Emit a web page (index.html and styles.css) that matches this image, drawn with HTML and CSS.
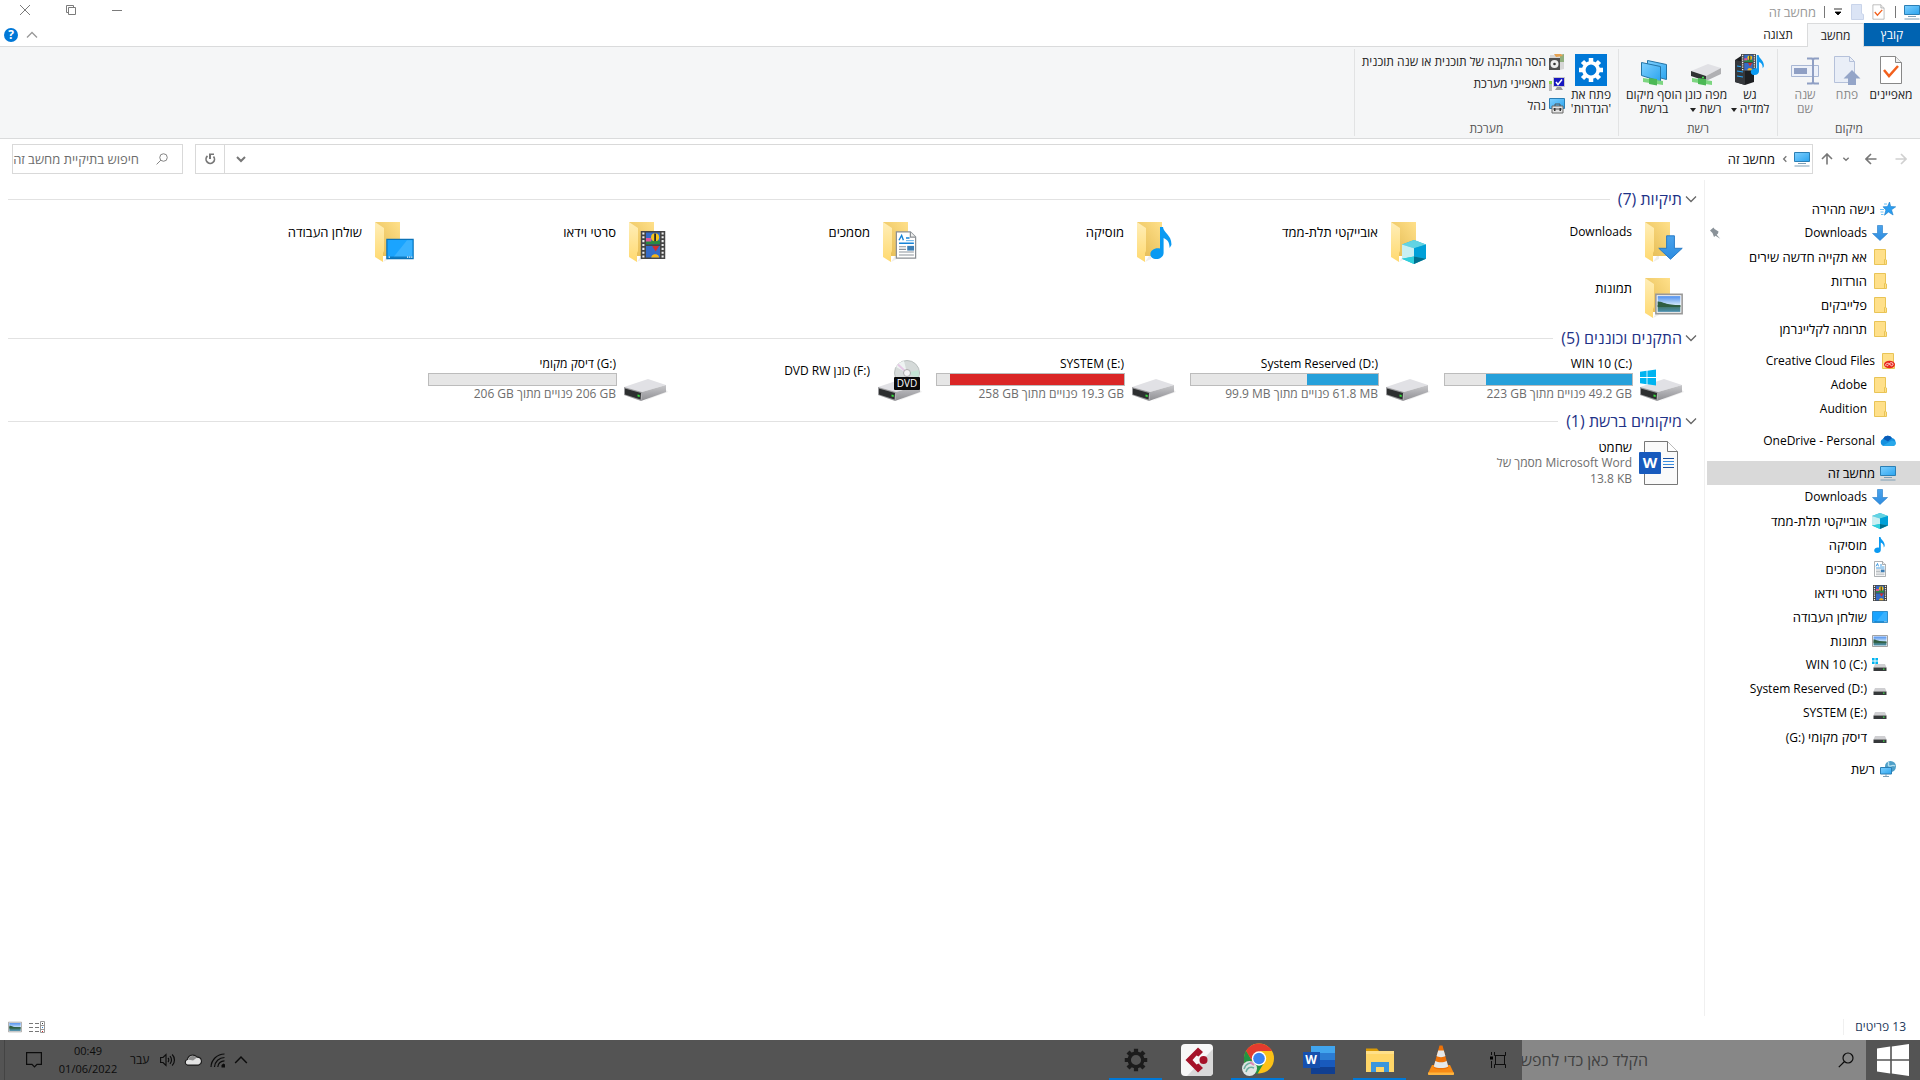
FILE: index.html
```html
<!DOCTYPE html>
<html lang="he" dir="rtl">
<head>
<meta charset="utf-8">
<meta name="viewport" content="width=device-width, initial-scale=1">
<title>מחשב זה</title>
<link rel="stylesheet" href="styles.css">
</head>
<body>
<svg class="sprite" aria-hidden="true">
  <defs>
    <linearGradient id="g-back" x1="0" y1="1" x2="1" y2="0"><stop offset="0" stop-color="#e3b950"/><stop offset="1" stop-color="#ffe08a"/></linearGradient>
    <linearGradient id="g-leaf" x1="0" y1="0" x2="0" y2="1"><stop offset="0" stop-color="#ffeeb8"/><stop offset="1" stop-color="#ffd96f"/></linearGradient>
    <linearGradient id="g-screen" x1="0" y1="0" x2="1" y2="1"><stop offset="0" stop-color="#7fd0ff"/><stop offset="1" stop-color="#2ba4ef"/></linearGradient>
    <linearGradient id="g-side" x1="0" y1="0" x2="0" y2="1"><stop offset="0" stop-color="#c8c8cb"/><stop offset="1" stop-color="#8e8e92"/></linearGradient>
    <linearGradient id="g-sky" x1="0" y1="0" x2="0" y2="1"><stop offset="0" stop-color="#4f8fee"/><stop offset=".55" stop-color="#cfe6fa"/><stop offset=".56" stop-color="#3e6d55"/><stop offset="1" stop-color="#4a8fb0"/></linearGradient>
    <linearGradient id="g-arrow" x1="0" y1="0" x2="0" y2="1"><stop offset="0" stop-color="#4aa3ec"/><stop offset="1" stop-color="#2d8ce0"/></linearGradient>
  </defs>

  <symbol id="i-folder-open" viewBox="0 0 48 48"><path d="M15 45l6-3V36z" fill="#eee"/><path d="M7 5H32V39H15z" fill="url(#g-back)"/><path d="M7 5l9 6v23l-1 2v9L7 40z" fill="url(#g-leaf)"/></symbol>
  <symbol id="i-down" viewBox="0 0 16 16"><path d="M5.500.5h5V8.500h5L8 15.500.5 8.500h5z" fill="url(#g-arrow)" stroke="#2278c4" stroke-width=".6"/></symbol>
  <symbol id="i-cube" viewBox="0 0 16 16"><path d="M8 0l8 3v9.500L8 16 0 12.500V3z" fill="#29b7d3"/><path d="M8 0l8 3-8 2.500L0 3z" fill="#62d3e3"/><path d="M0 3l8 2.500V11L0 12.500z" fill="#c9eff2"/><path d="M8 5.500L16 3v9.500L8 11z" fill="#00a0d8"/><path d="M8 11l8 1.500L8 16z" fill="#00708f"/><path d="M0 12.500L8 11v5z" fill="#2fd0dc"/></symbol>
  <symbol id="i-note" viewBox="0 0 16 16"><path d="M7 0h1.500c.2 3 4.500 4 4.200 9l-.9 1.500c0-3-1.200-4.200-3-5V13c0 1.700-1.600 3-3.600 3-1.800 0-3-.9-3-2.500 0-1.900 2.600-3.400 4.800-2.700z" fill="#0a9af2"/></symbol>
  <symbol id="i-doc" viewBox="0 0 16 16"><path d="M2.500.5h8l3 3v12h-11z" fill="#fff" stroke="#8a8f94" stroke-width=".7"/><path d="M10.500.5v3h3" fill="#eee" stroke="#8a8f94" stroke-width=".7"/><path d="M4 5.300L5.500 2.500 6.500 5.300M8 4h2M4 7h8.500" stroke="#1583d8" fill="none" stroke-width=".8"/><path d="M8 5.500h4.500" stroke="#6bb5ea" stroke-width=".6"/><path d="M4 9h4M4 10.500h4M4 12h8.500M4 13.700h8.500" stroke="#8c949b" stroke-width=".6"/><path d="M8.700 8.500H12.600V11.200H8.700z" fill="#3e7fb5"/></symbol>
  <symbol id="i-film" viewBox="0 0 16 16"><path d="M1 0h14v16H1z" fill="#444"/><path d="M4 .8h8v6.700H4zM4 8.500h8v6.700H4z" fill="#356bc8"/><path d="M4 5.500h8v2H4z" fill="#278b42"/><path d="M4 4h3v2H4z" fill="#e0559a"/><circle cx="9.200" cy="3.600" r="2.300" fill="#f5c51b"/><path d="M8.700 1.400h1v4.500h-1z" fill="#20242c"/><path d="M7.500 8.500h4l-2 3.200z" fill="#d22e2e"/><path d="M7 15.200c0-2.600 4.500-2.600 4.500 0z" fill="#f5b51b"/><path d="M2.500.8v15M13.500.8v15" stroke="#eee" stroke-width="1.200" stroke-dasharray="1.200 1"/></symbol>
  <symbol id="i-desk" viewBox="0 0 16 16"><path d="M.5 2.500h15v11H.5z" fill="#1aa4ff" stroke="#0a72b8" stroke-width=".7"/><path d="M4 13L12 3h3v10z" fill="#3ab2ff"/><path d="M1 12.700h14" stroke="#0a72b8" stroke-width=".7"/><path d="M1.500 12.700h1M12 12.700h3" stroke="#fff" stroke-width=".7" stroke-dasharray=".7 .5"/></symbol>
  <symbol id="i-pic" viewBox="0 0 16 16"><path d="M.5 2.500h15v11H.5z" fill="#fff" stroke="#999" stroke-width=".9"/><path d="M1.500 3.500h13v9h-13z" fill="url(#g-sky)"/><path d="M1.500 6.500c3 0 4.500 2 13 2.200v1h-13z" fill="#2f5e41"/></symbol>
  <symbol id="i-folder" viewBox="0 0 16 16"><path d="M2.500.5h11v10l1 .5v4.500h-12z" fill="#ffe08a" stroke="#e9c456"/><path d="M12.500 15V10.500h1" fill="none" stroke="#e9c456"/></symbol>
  <symbol id="i-pc" viewBox="0 0 16 16"><path d="M.5 1.500h15v9H.5z" fill="url(#g-screen)" stroke="#2b7fb5"/><path d="M4 12.500h8M.5 15h15" stroke="#7f9fb5"/></symbol>
  <symbol id="i-drive" viewBox="0 0 48 48"><path d="M22 45l24-9-3-3z" fill="#eee"/><path d="M2 31l24-8 18 6-24 7z" fill="#e1e1e5"/><path d="M20 36l24-7v7l-25 9z" fill="url(#g-side)"/><path d="M2 31l18 5-1 9-17-6z" fill="#9b9b9e"/><path d="M3 32.500l16 4.500-.5 6.500L3 38.500z" fill="#2d2f30"/><path d="M15.500 38.500l2.200.6v2l-2.200-.6z" fill="#35e03c"/></symbol>
  <symbol id="i-drive-s" viewBox="0 0 16 16"><path d="M3 5h10l1.500 3.500h-13z" fill="#cfcfd2"/><path d="M1.500 8.500h13V12h-13z" fill="#36393b"/><path d="M11 10.200h1.500" stroke="#41e04c" stroke-width="1.200"/></symbol>
  <symbol id="i-win" viewBox="0 0 16 16"><path d="M0 2.300L6.600 1.300V7.600H0zM7.400 1.200L16 0V7.600H7.400zM0 8.400H6.600V14.700L0 13.700zM7.400 8.400H16V16L7.400 14.800z"/></symbol>
  <symbol id="i-drive-win" viewBox="0 0 16 16"><use href="#i-drive-s" y="2"/><path d="M0 1h2.600v2.600H0zM3.400 1H6v2.600H3.400zM0 4.400h2.600V7H0zM3.400 4.400H6V7H3.400z" fill="#00b4f0"/></symbol>
  <symbol id="i-star" viewBox="0 0 16 16"><path d="M9.500 1l1.200 4.500 5 .3-4.200 3 1.600 5.200-4.600-3-4 3.200 1.400-5.200L3 5.800l4.500-.2z" fill="#2a9df0" stroke="#1c7cc8" stroke-width=".6"/><path d="M0 8.500h4M.5 11h3M1 13.500h2.500M4 3h3" stroke="#6cc0f5"/></symbol>
  <symbol id="i-pin" viewBox="0 0 12 12"><path d="M1 3.500L4.500.5l1 1.500 4 2.500-.5 2L7.700 7.700l3.500 4-4.700-3L5 10 3.500 6z" fill="#8a9299"/></symbol>
  <symbol id="i-cc" viewBox="0 0 16 16"><use href="#i-folder"/><ellipse cx="9.500" cy="11.500" rx="5.500" ry="3.800" fill="#e8261c"/><path d="M5.500 12.500c0-2.500 3.500-3 4.500-1s3 1.500 3-.3-2.500-2-3.500-.5-2 2.700-3 1.800" fill="none" stroke="#fff" stroke-width=".8"/></symbol>
  <symbol id="i-cloud" viewBox="0 0 16 16"><path d="M4 13a3.800 3.800 0 0 1-.8-7.300A5 5 0 0 1 12 5a4.200 4.200 0 0 1 1 8z" fill="#1490df"/><path d="M3.200 5.700A5 5 0 0 1 12 5l-4 3.500z" fill="#0a5cb8"/><path d="M3 12.500L12 7.500l3.500 1.500c1 2-.5 4-2.500 4H4z" fill="#28a8ea"/></symbol>
  <symbol id="i-net" viewBox="0 0 16 16"><circle cx="10.500" cy="5.500" r="5.500" fill="#4e9fc8"/><path d="M8 1c2 2-1 3 1 4s3-2 6 0" fill="none" stroke="#b5dfef" stroke-width="1.400"/><path d="M.5 6.500h11v6.500H.5z" fill="url(#g-screen)" stroke="#2b7fb5"/><path d="M3 15.500h6M6 13v2" stroke="#7f9fb5"/></symbol>

  <symbol id="i-prop" viewBox="0 0 22 30"><path d="M.5 1.500h15l6 6v21H.5z" fill="#fff" stroke="#888"/><path d="M15.500 1.500v6h6" fill="#eee" stroke="#888"/><path d="M4 15l5 6 9-10" fill="none" stroke="#f2601d" stroke-width="2.500"/></symbol>
  <symbol id="i-open" viewBox="0 0 28 32"><path d="M1.500 2.500h15l5 5v21h-20z" fill="#e9eef7" stroke="#b5c1da"/><path d="M16.500 2.500v5h5" fill="none" stroke="#b5c1da"/><path d="M19 16l8.500 8.500H23V31h-8v-6.500h-4.500z" fill="#94a5c8"/></symbol>
  <symbol id="i-rename" viewBox="0 0 28 32"><path d="M.5 11.500h27v11H.5z" fill="#edf1f9" stroke="#a9b7d4"/><path d="M3 14h13v6H3z" fill="#8f9fc4"/><path d="M16 4.500h5l1 1.500 1-1.500h5M16 29.500h5l1-1.500 1 1.500h5M22 5v24" fill="none" stroke="#8f9fc4" stroke-width="2"/></symbol>
  <symbol id="i-media" viewBox="0 0 32 32"><path d="M1 6l6-4 13 2v24l-9 3-10-3z" fill="#1d1f22"/><path d="M1 6l10 2v23L1 28z" fill="#35383c"/><path d="M3 12l6 1M3 17l6 1M3 22l6 1" stroke="#22a6ff" stroke-width="1.200"/><svg x="6" y="0" width="17" height="17" viewBox="0 0 16 16"><use href="#i-film"/></svg><svg x="14" y="1" width="20" height="20" viewBox="0 0 16 16"><use href="#i-note"/></svg></symbol>
  <symbol id="i-pipe" viewBox="0 0 20 8"><path d="M0 0l20 3v4L0 4z" fill="#7dd681"/><path d="M6 0l8 1v6.500L6 6z" fill="#4cb955"/></symbol>
  <symbol id="i-map" viewBox="0 0 32 32"><path d="M1 17l17-7 13 4-15 8z" fill="#e1e1e5"/><path d="M16 22l15-8v6l-15 7z" fill="#b0b0b3"/><path d="M1 17l15 5v5L1 22z" fill="#303233"/><path d="M12 23.500h2" stroke="#3fe04a" stroke-width="1.500"/><use href="#i-pipe" x="2" y="24" width="20" height="8"/></symbol>
  <symbol id="i-addnet" viewBox="0 0 32 32"><path d="M9.500 6.500l19 4v15l-19-5z" fill="url(#g-screen)" stroke="#2474a6"/><path d="M3.500 8.500l19 4v15l-19-6z" fill="url(#g-screen)" stroke="#2474a6"/><use href="#i-pipe" x="5" y="24" width="20" height="8"/></symbol>
  <symbol id="i-gear" viewBox="0 0 32 32"><circle cx="16" cy="16" r="7.200" fill="none" stroke="currentColor" stroke-width="3.600"/><path d="M16 4v4M16 24v4M4 16h4M24 16h4M7.500 7.500l3 3M21.500 21.500l3 3M24.500 7.500l-3 3M10.500 21.500l-3 3" stroke="currentColor" stroke-width="4.500"/></symbol>
  <symbol id="i-uninst" viewBox="0 0 16 16"><path d="M1 1h10l4-1v15l-4 1H1z" fill="#d7d7d7"/><path d="M11 1l4-1v8h-4z" fill="#8fae7d"/><path d="M5 0l7 0 2 2-7 1z" fill="#e6a252"/><path d="M0 4h11v12H0z" fill="#505050"/><circle cx="5.500" cy="10" r="4" fill="#eee"/><circle cx="5.500" cy="10" r="1.300" fill="#333"/></symbol>
  <symbol id="i-sysprop" viewBox="0 0 16 16"><path d="M4 1h12v10H4z" fill="#c9c9c9"/><path d="M5 2h10v8H5z" fill="#1717c0"/><path d="M7 6l2 2.500L13 3.500" stroke="#fff" fill="none" stroke-width="1.500"/><path d="M8 11h4l2 3H6z" fill="#999"/><path d="M0 5h3v10H0z" fill="#bbb"/><path d="M0 5h3v3H0z" fill="#8dd34a"/></symbol>
  <symbol id="i-manage" viewBox="0 0 16 16"><path d="M.5.5h15v10H.5z" fill="url(#g-screen)" stroke="#2b7fb5"/><path d="M3 8h11v7H3z" fill="#e3e3e3" stroke="#666"/><path d="M6 8V6h5v2M4 11h9" stroke="#555" fill="none"/><path d="M5 10h1.500v3H5zM10.500 10H12v3h-1.500z" fill="#333"/></symbol>

  <symbol id="i-x" viewBox="0 0 12 12"><path d="M1 1l10 10M11 1L1 11" stroke="#7b7b7b" fill="none"/></symbol>
  <symbol id="i-restore" viewBox="0 0 12 12"><path d="M3.500 3.500h7v7h-7zM3.500 8.500h-2v-7h7v2" stroke="#7b7b7b" fill="none"/></symbol>
  <symbol id="i-min" viewBox="0 0 12 12"><path d="M1 6.500h10" stroke="#7b7b7b"/></symbol>
  <symbol id="i-chev" viewBox="0 0 12 12"><path d="M1 3.500l5 5 5-5" stroke="currentColor" stroke-width="1.300" fill="none"/></symbol>
  <symbol id="i-chev-b" viewBox="0 0 12 12"><path d="M2 4l4 4 4-4" stroke="currentColor" stroke-width="2" fill="none"/></symbol>
  <symbol id="i-arrow" viewBox="0 0 12 12"><path d="M.5 6h11M6 1L1 6l5 5" stroke="currentColor" stroke-width="1.600" fill="none"/></symbol>
  <symbol id="i-mag" viewBox="0 0 16 16"><circle cx="10" cy="6" r="5" stroke="currentColor" fill="none" stroke-width="1.200"/><path d="M6.500 9.500L.8 15.200" stroke="currentColor" stroke-width="1.200"/></symbol>
  <symbol id="i-refresh" viewBox="0 0 12 12"><path d="M9.500 3.500a4.200 4.200 0 1 1-6-.5" stroke="currentColor" fill="none" stroke-width="1.700"/><path d="M5 .5h5v1.500H7V6H5z" fill="currentColor"/></symbol>
  <symbol id="i-details" viewBox="0 0 16 12"><path d="M0 2.500h4M6 2.500h4M0 6.500h4M6 6.500h4M0 10.500h4M6 10.500h4" stroke="#777"/><path d="M11.500.5h4v11h-4zM11.500 4.500h4M11.500 8.500h4" fill="none" stroke="#999"/><path d="M13 2h1v1h-1z" fill="#333"/><path d="M13 6h1v1h-1z" fill="#27c"/><path d="M13 10h1v1h-1z" fill="#c22"/></symbol>

  <symbol id="i-tview" viewBox="0 0 16 16"><path d="M4.500 0v3.500h11V0M4.500 16v-3.500h11V16M5.500 3.500v9M14.500 3.500v9M1.500 0v3M1.500 9v7" stroke="#0d0d0d" fill="none"/><path d="M0 4.500h3v3H0z" fill="#000"/></symbol>
  <symbol id="i-vlc" viewBox="0 0 32 32"><path d="M7 21h18l4 8.500c0 .5-.5 1-1 1H4c-.5 0-1-.5-1-1z" fill="#f98a14"/><path d="M3 28.500h26v1.500c0 .5-.5 1-1 1H4c-.5 0-1-.5-1-1z" fill="#ffb43e"/><path d="M14.500 1.500h3l6 22c-2 2.500-13 2.500-15 0z" fill="#ee7208"/><path d="M13.200 6.500h5.600l1.600 5.500c-2 1.500-6.800 1.500-8.800 0zM10.300 17c3 1.700 8.400 1.700 11.400 0l1.500 5.500c-3 2-11.400 2-14.400 0z" fill="#e5e8ea"/></symbol>
  <symbol id="i-expl" viewBox="0 0 32 32"><path d="M2 4.500h11l2 2.500H2z" fill="#d99a06"/><path d="M2 7h28v21H2z" fill="#ffd668"/><path d="M2 7h28v3H2z" fill="#ffe08a"/><path d="M7 28V18h18v10h-5v-5h-8v5z" fill="#3a96dd"/></symbol>
  <symbol id="i-chrome" viewBox="0 0 34 34"><circle cx="18" cy="15.500" r="15" fill="#fbc116"/><path d="M5 8a15 15 0 0 1 26 0H18z" fill="#e33b2e"/><path d="M5 8a15 15 0 0 0 11.500 22.400L23 20 11.500 19z" fill="#229342"/><path d="M5 8h14v5l-8 5z" fill="#e33b2e"/><path d="M5 8l6.500 11L18 22l-1 8.400A15 15 0 0 1 5 8z" fill="#229342"/><circle cx="18" cy="15.500" r="7.200" fill="#fff"/><circle cx="18" cy="15.500" r="5.800" fill="#3a82f0"/><circle cx="8.500" cy="25.500" r="7.500" fill="#dfe5e2"/><path d="M3 26c2-6 7-7 9-5M5 29c1-4 4-6 8-4" stroke="#6fb0a0" stroke-width="1.500" fill="none"/><path d="M9 19l4 3" stroke="#e088b8" stroke-width="2"/></symbol>
  <symbol id="i-cubase" viewBox="0 0 32 32"><rect width="32" height="32" rx="4" fill="#f7f7f7"/><path d="M32 5v23a4 4 0 0 1-4 4H6z" fill="#d9d9d9"/><path d="M4.500 16L17 3.500l5 4.500-4.500 4.500-2-1-4 4.500 4 4.500 2-1L22 24l-5 4.500z" fill="#a51329"/><circle cx="22.500" cy="16" r="4" fill="#a51329"/></symbol>
  <symbol id="i-wifi" viewBox="0 0 16 16"><g fill="none" stroke="#0c0c0c" stroke-width="1.200"><path d="M1 15A13.500 13.500 0 0 1 14.500 2"/><path d="M4.500 15A10 10 0 0 1 14.500 5.500"/><path d="M7.800 15A6.600 6.600 0 0 1 14.500 8.800"/></g><path d="M11.500 15.500v-2.500l2-1.500 1.500 1v3z" fill="#0c0c0c"/></symbol>
  <symbol id="i-tcloud" viewBox="0 0 16 16"><path d="M3 12.500a2.600 2.600 0 0 1 0-5A4.800 4.800 0 0 1 11.500 5.500a3.600 3.600 0 0 1 1.500 7z" fill="#e3e3e3" stroke="#1c1c1c"/><path d="M3.500 7.500A4.500 4.500 0 0 1 11.300 6L8 8.500z" fill="#8d8d8d"/></symbol>
  <symbol id="i-vol" viewBox="0 0 16 16"><path d="M.6 5.500H3L6 2.500v11L3 10.500H.6z" fill="none" stroke="#0c0c0c" stroke-width="1.100"/><path d="M8 6c1 1 1 3 0 4M10 4.200c2 2 2 5.600 0 7.600M12.200 2.500c3 3 3 8 0 11" fill="none" stroke="#0c0c0c" stroke-width="1.200"/></symbol>
  <symbol id="i-notif" viewBox="0 0 16 16"><path d="M.6.6h14.800v11.800H11L8.500 15l-2.500-2.600H.6z" fill="none" stroke="#0c0c0c" stroke-width="1.200"/></symbol>
</svg>

<header class="titlebar">
  <div class="quick">
    <svg class="ic16"><use href="#i-pc"/></svg>
    <span class="vline"></span>
    <button class="plain props" aria-label="מאפיינים"><svg class="ic-doc"><use href="#i-prop"/></svg></button>
    <button class="plain" aria-label="תיקיה חדשה"><svg class="ic-doc" viewBox="0 0 13 16"><path d="M.5.5h10v9l2 1v5H.5z" fill="#dbe4f5" stroke="#c9d4ea"/></svg></button>
    <button class="plain more" aria-label="התאמה אישית"><svg class="ic8" viewBox="0 0 8 8"><path d="M0 1h8M1 4h6L4 7z" stroke="#000" fill="#000" stroke-width=".8"/></svg></button>
    <span class="vline"></span>
    <span class="title">מחשב זה</span>
  </div>
  <div class="wincontrols">
    <button class="plain" aria-label="מזער"><svg class="ic12"><use href="#i-min"/></svg></button>
    <button class="plain" aria-label="שחזר"><svg class="ic12"><use href="#i-restore"/></svg></button>
    <button class="plain" aria-label="סגור"><svg class="ic12"><use href="#i-x"/></svg></button>
  </div>
</header>

<nav class="tabs">
  <button class="tab file">קובץ</button>
  <button class="tab active">מחשב</button>
  <button class="tab view">תצוגה</button>
  <div class="tabs-end">
    <button class="plain collapse" aria-label="כווץ את רצועת הכלים"><svg class="ic12 flip"><use href="#i-chev"/></svg></button>
    <button class="plain help" aria-label="עזרה">?</button>
  </div>
</nav>

<section class="ribbon">
  <div class="group">
    <div class="tools">
      <button class="tool w48"><svg class="ic-prop"><use href="#i-prop"/></svg><span>מאפיינים</span></button>
      <button class="tool w40" disabled><svg class="ic-big"><use href="#i-open"/></svg><span>פתח</span></button>
      <button class="tool w44" disabled><svg class="ic-big"><use href="#i-rename"/></svg><span>שנה<br>שם</span></button>
    </div>
    <div class="group-name">מיקום</div>
  </div>
  <div class="group">
    <div class="tools">
      <button class="tool w44"><svg class="ic32"><use href="#i-media"/></svg><span>גש<br>למדיה <i class="caret"></i></span></button>
      <button class="tool w44"><svg class="ic32"><use href="#i-map"/></svg><span>מפה כונן<br>רשת <i class="caret"></i></span></button>
      <button class="tool w60"><svg class="ic32"><use href="#i-addnet"/></svg><span>הוסף מיקום<br>ברשת</span></button>
    </div>
    <div class="group-name">רשת</div>
  </div>
  <div class="group">
    <div class="tools">
      <button class="tool w44"><svg class="ic32 settings"><use href="#i-gear"/></svg><span>פתח את<br>'הגדרות'</span></button>
      <div class="small-tools">
        <button class="small-tool"><svg class="ic16"><use href="#i-uninst"/></svg>הסר התקנה של תוכנית או שנה תוכנית</button>
        <button class="small-tool"><svg class="ic16"><use href="#i-sysprop"/></svg>מאפייני מערכת</button>
        <button class="small-tool"><svg class="ic16"><use href="#i-manage"/></svg>נהל</button>
      </div>
    </div>
    <div class="group-name">מערכת</div>
  </div>
</section>

<div class="addressbar">
  <div class="history">
    <button class="plain dim" aria-label="קדימה"><svg class="ic12 flip"><use href="#i-arrow"/></svg></button>
    <button class="plain" aria-label="אחורה"><svg class="ic12"><use href="#i-arrow"/></svg></button>
    <button class="plain recent" aria-label="אחרונים"><svg class="ic8"><use href="#i-chev-b"/></svg></button>
    <button class="plain up" aria-label="למעלה"><svg class="ic12 quarter"><use href="#i-arrow"/></svg></button>
  </div>
  <div class="path">
    <svg class="ic16"><use href="#i-pc"/></svg>
    <svg class="ic8 quarter"><use href="#i-chev-b"/></svg>
    <a href="#pc">מחשב זה</a>
    <button class="plain drop" aria-label="מיקומים קודמים"><svg class="ic12"><use href="#i-chev-b"/></svg></button>
    <button class="plain refresh" aria-label="רענן"><svg class="ic12"><use href="#i-refresh"/></svg></button>
  </div>
  <label class="search"><svg class="ic12"><use href="#i-mag"/></svg><input type="text" placeholder="חיפוש בתיקיית מחשב זה" aria-label="חיפוש בתיקיית מחשב זה"></label>
</div>

<div class="workspace">
  <aside class="tree">
    <ul>
      <li><a href="#q"><svg class="ic16"><use href="#i-star"/></svg>גישה מהירה</a></li>
      <li class="sub"><a href="#q1"><svg class="ic16"><use href="#i-down"/></svg><span class="en">Downloads</span><svg class="pin"><use href="#i-pin"/></svg></a></li>
      <li class="sub"><a href="#q2"><svg class="ic16"><use href="#i-folder"/></svg>אא תקייה חדשה שירים</a></li>
      <li class="sub"><a href="#q3"><svg class="ic16"><use href="#i-folder"/></svg>הורדות</a></li>
      <li class="sub"><a href="#q4"><svg class="ic16"><use href="#i-folder"/></svg>פלייבקים</a></li>
      <li class="sub"><a href="#q5"><svg class="ic16"><use href="#i-folder"/></svg>תרומה לקליינרמן</a></li>
    </ul>
    <ul>
      <li><a href="#c"><svg class="ic16"><use href="#i-cc"/></svg><span class="en">Creative Cloud Files</span></a></li>
      <li class="sub"><a href="#c1"><svg class="ic16"><use href="#i-folder"/></svg><span class="en">Adobe</span></a></li>
      <li class="sub"><a href="#c2"><svg class="ic16"><use href="#i-folder"/></svg><span class="en">Audition</span></a></li>
    </ul>
    <ul>
      <li><a href="#o"><svg class="ic16"><use href="#i-cloud"/></svg><span class="en">OneDrive - Personal</span></a></li>
    </ul>
    <ul>
      <li class="selected"><a href="#pc"><svg class="ic16"><use href="#i-pc"/></svg>מחשב זה</a></li>
      <li class="sub"><a href="#p1"><svg class="ic16"><use href="#i-down"/></svg><span class="en">Downloads</span></a></li>
      <li class="sub"><a href="#p2"><svg class="ic16"><use href="#i-cube"/></svg>אובייקטי תלת-ממד</a></li>
      <li class="sub"><a href="#p3"><svg class="ic16"><use href="#i-note"/></svg>מוסיקה</a></li>
      <li class="sub"><a href="#p4"><svg class="ic16"><use href="#i-doc"/></svg>מסמכים</a></li>
      <li class="sub"><a href="#p5"><svg class="ic16"><use href="#i-film"/></svg>סרטי וידאו</a></li>
      <li class="sub"><a href="#p6"><svg class="ic16"><use href="#i-desk"/></svg>שולחן העבודה</a></li>
      <li class="sub"><a href="#p7"><svg class="ic16"><use href="#i-pic"/></svg>תמונות</a></li>
      <li class="sub"><a href="#p8"><svg class="ic16"><use href="#i-drive-win"/></svg><bdi class="en" dir="ltr">WIN 10 (C:)</bdi></a></li>
      <li class="sub"><a href="#p9"><svg class="ic16"><use href="#i-drive-s" y="2"/></svg><bdi class="en" dir="ltr">System Reserved (D:)</bdi></a></li>
      <li class="sub"><a href="#p10"><svg class="ic16"><use href="#i-drive-s" y="2"/></svg><bdi class="en" dir="ltr">SYSTEM (E:)</bdi></a></li>
      <li class="sub"><a href="#p11"><svg class="ic16"><use href="#i-drive-s" y="2"/></svg><span>דיסק מקומי <bdi class="en" dir="ltr">(G:)</bdi></span></a></li>
    </ul>
    <ul>
      <li><a href="#n"><svg class="ic16"><use href="#i-net"/></svg>רשת</a></li>
    </ul>
  </aside>

  <main class="files" id="pc">
    <h2><svg class="ic12"><use href="#i-chev"/></svg>תיקיות (7)</h2>
    <div class="grid">
      <a class="item" href="#f1"><svg class="ic48" viewBox="0 0 48 48"><use href="#i-folder-open"/><use href="#i-down" x="20" y="18" width="25" height="25"/></svg><span class="info one en">Downloads</span></a>
      <a class="item" href="#f2"><svg class="ic48" viewBox="0 0 48 48"><use href="#i-folder-open"/><use href="#i-cube" x="18" y="23" width="24" height="24"/></svg><span class="info one">אובייקטי תלת-ממד</span></a>
      <a class="item" href="#f3"><svg class="ic48" viewBox="0 0 48 48"><use href="#i-folder-open"/><use href="#i-note" x="16" y="10" width="32" height="32"/></svg><span class="info one">מוסיקה</span></a>
      <a class="item" href="#f4"><svg class="ic48" viewBox="0 0 48 48"><use href="#i-folder-open"/><use href="#i-doc" x="16" y="14" width="28" height="28"/></svg><span class="info one">מסמכים</span></a>
      <a class="item" href="#f5"><svg class="ic48" viewBox="0 0 48 48"><use href="#i-folder-open"/><use href="#i-film" x="17" y="14" width="28" height="28"/></svg><span class="info one">סרטי וידאו</span></a>
      <a class="item" href="#f6"><svg class="ic48" viewBox="0 0 48 48"><use href="#i-folder-open"/><use href="#i-desk" x="18" y="18" width="28" height="28"/></svg><span class="info one">שולחן העבודה</span></a>
      <a class="item" href="#f7"><svg class="ic48" viewBox="0 0 48 48"><use href="#i-folder-open"/><use href="#i-pic" x="17" y="17" width="28" height="28"/></svg><span class="info one">תמונות</span></a>
    </div>

    <h2><svg class="ic12"><use href="#i-chev"/></svg>התקנים וכוננים (5)</h2>
    <div class="grid">
      <a class="item" href="#d1"><svg class="ic48" viewBox="0 0 48 48"><use href="#i-drive"/><use href="#i-win" x="2" y="13" width="16" height="17" fill="#00b4f0"/></svg><span class="info en"><bdi dir="ltr">WIN 10 (C:)</bdi><span class="bar"><span class="used" style="width:78%"></span></span><span class="sub-text"><bdi>49.2 GB</bdi> פנויים מתוך <bdi>223 GB</bdi></span></span></a>
      <a class="item" href="#d2"><svg class="ic48" viewBox="0 0 48 48"><use href="#i-drive"/></svg><span class="info en"><bdi dir="ltr">System Reserved (D:)</bdi><span class="bar"><span class="used" style="width:38%"></span></span><span class="sub-text"><bdi>61.8 MB</bdi> פנויים מתוך <bdi>99.9 MB</bdi></span></span></a>
      <a class="item" href="#d3"><svg class="ic48" viewBox="0 0 48 48"><use href="#i-drive"/></svg><span class="info en"><bdi dir="ltr">SYSTEM (E:)</bdi><span class="bar"><span class="used full" style="width:93%"></span></span><span class="sub-text"><bdi>19.3 GB</bdi> פנויים מתוך <bdi>258 GB</bdi></span></span></a>
      <a class="item" href="#d4"><svg class="ic48" viewBox="0 0 48 48"><use href="#i-drive"/><circle cx="31" cy="17" r="12.500" fill="#d5dad9" stroke="#b9bfbe"/><path d="M31 17L20 11a12 12 0 0 1 8-6z" fill="#eef3f2"/><path d="M31 17l11 5a12 12 0 0 0 .5-8z" fill="#c3e3d3"/><path d="M31 17L22 8.500" stroke="#e6c9e6" stroke-width="2"/><circle cx="31" cy="17" r="3.500" fill="#f4f4f4" stroke="#aaa"/><rect x="18" y="21" width="26" height="13" rx="1" fill="#0b0b0b"/><text x="31" y="31" text-anchor="middle" font-size="10" fill="#fff">DVD</text></svg><span class="info one en"><span><bdi dir="ltr">(F:)</bdi> כונן <bdi>DVD RW</bdi></span></span></a>
      <a class="item" href="#d5"><svg class="ic48" viewBox="0 0 48 48"><use href="#i-drive"/></svg><span class="info en"><span><bdi dir="ltr">(G:)</bdi> דיסק מקומי</span><span class="bar"></span><span class="sub-text"><bdi>206 GB</bdi> פנויים מתוך <bdi>206 GB</bdi></span></span></a>
    </div>

    <h2><svg class="ic12"><use href="#i-chev"/></svg>מיקומים ברשת (1)</h2>
    <div class="grid">
      <a class="item" href="#w1"><svg class="ic48" viewBox="0 0 48 48"><path d="M6.500 2.500h23l10 10v33h-33z" fill="#fafafa" stroke="#777"/><path d="M29.500 2.500v10h10" fill="#fff" stroke="#777"/><path d="M25 19.500h11M25 28.500h11" stroke="#1b4f9c"/><path d="M25 22.500h11M25 25.500h11" stroke="#3a8ee0"/><rect x="1" y="13" width="22" height="22" rx="1" fill="#185abd"/><text x="12" y="29" text-anchor="middle" font-size="15" font-weight="700" fill="#fff">W</text></svg><span class="info">שחמט<span class="sub-text en"><bdi>Microsoft Word</bdi> מסמך של</span><span class="sub-text en"><bdi>13.8 KB</bdi></span></span></a>
    </div>
  </main>
</div>

<footer class="status">
  <span class="count">13 פריטים</span>
  <div class="views">
    <button class="plain" aria-label="פרטים"><svg class="ic-det"><use href="#i-details"/></svg></button>
    <button class="plain" aria-label="סמלים גדולים"><svg class="ic14" viewBox="0 0 16 16"><use href="#i-pic"/></svg></button>
  </div>
</footer>

<div class="taskbar">
  <button class="plain start" aria-label="התחל"><svg class="ic32 white"><use href="#i-win"/></svg></button>
  <label class="tsearch"><svg class="ic16"><use href="#i-mag"/></svg><input type="text" placeholder="הקלד כאן כדי לחפש" aria-label="הקלד כאן כדי לחפש"></label>
  <button class="plain tview" aria-label="תצוגת משימות"><svg class="ic16"><use href="#i-tview"/></svg></button>
  <button class="plain app" aria-label="VLC"><svg class="ic32"><use href="#i-vlc"/></svg></button>
  <button class="plain app open" aria-label="סייר הקבצים"><svg class="ic32"><use href="#i-expl"/></svg></button>
  <button class="plain app" aria-label="Word"><svg class="ic32" viewBox="0 0 32 32"><path d="M8 2h24v7H8z" fill="#41a5ee"/><path d="M8 9h24v7H8z" fill="#2b7cd3"/><path d="M8 16h24v7H8z" fill="#185abd"/><path d="M8 23h24v7H8z" fill="#103f91"/><path d="M0 8h17v16H0z" fill="#1650ae"/><text x="8" y="20" text-anchor="middle" font-size="12" font-weight="700" fill="#fff">W</text></svg></button>
  <button class="plain app open" aria-label="Chrome"><svg class="ic34"><use href="#i-chrome"/></svg></button>
  <button class="plain app" aria-label="Cubase"><svg class="ic32"><use href="#i-cubase"/></svg></button>
  <button class="plain app open" aria-label="הגדרות"><svg class="ic32 dark"><use href="#i-gear"/></svg></button>
  <div class="tray">
    <button class="plain" aria-label="סמלים מוסתרים"><svg class="ic14 flip" viewBox="0 0 12 12"><use href="#i-chev"/></svg></button>
    <button class="plain" aria-label="רשת"><svg class="ic16"><use href="#i-wifi"/></svg></button>
    <button class="plain" aria-label="OneDrive"><svg class="ic18" viewBox="0 0 16 16"><use href="#i-tcloud"/></svg></button>
    <button class="plain" aria-label="עוצמת קול"><svg class="ic16"><use href="#i-vol"/></svg></button>
    <button class="plain lang">עבר</button>
    <button class="plain clock"><span>00:49</span><span>01/06/2022</span></button>
    <button class="plain notif" aria-label="התראות"><svg class="ic16"><use href="#i-notif"/></svg></button>
  </div>
</div>
</body>
</html>
```
FILE: styles.css
```css
* { box-sizing: border-box; }

body {
  margin: 0;
  min-height: 100vh;
  display: flex;
  flex-direction: column;
  background: #fff;
  color: #000;
  font: 12px/16px "Open Sans", "Noto Sans", sans-serif;
}

button, input { font: inherit; color: inherit; }
a { color: inherit; text-decoration: none; }
svg { display: block; flex: none; }
.sprite { position: absolute; width: 0; height: 0; }

.ic8 { width: 8px; height: 8px; }
.ic12 { width: 12px; height: 12px; }
.ic14 { width: 14px; height: 14px; }
.ic16 { width: 16px; height: 16px; }
.ic18 { width: 18px; height: 18px; }
.ic32 { width: 32px; height: 32px; }
.ic34 { width: 34px; height: 34px; }
.ic48 { width: 48px; height: 48px; }
.ic-doc { width: 13px; height: 16px; }
.ic-prop { width: 22px; height: 32px; }
.ic-big { width: 28px; height: 32px; }
.ic-det { width: 16px; height: 12px; }
.flip { transform: rotate(180deg); }
.quarter { transform: rotate(90deg); }
.en { font-size: 12px; }

.plain {
  display: flex;
  align-items: center;
  justify-content: center;
  padding: 0;
  border: 0;
  background: none;
}

/* Title bar */
.titlebar { display: flex; justify-content: space-between; height: 23px; }
.quick { display: flex; align-items: center; gap: 8px; }
.quick .props { margin-right: 2px; }
.quick .more { margin: 0 1px; }
.vline { width: 1px; height: 12px; background: #777; }
.title { font-size: 13px; color: #999; }
.wincontrols { display: flex; padding-left: 2px; }
.wincontrols .plain { width: 46px; padding-bottom: 3px; }

/* Tabs */
.tabs { display: flex; height: 24px; border-bottom: 1px solid #dadbdc; }
.tab { padding: 0; border: 0; background: none; width: 56px; color: #222; }
.tab.file { background: #0063b1; color: #fff; }
.tab.active {
  width: 57px;
  height: 24px;
  background: #f5f6f7;
  border: 1px solid #dadbdc;
  border-bottom: 0;
}
.tab.view { width: 58px; }
.tabs-end { display: flex; align-items: center; gap: 8px; margin-inline-start: auto; padding-left: 4px; color: #999; }
.help { width: 14px; height: 14px; border-radius: 7px; background: #0078d7; color: #fff; font-weight: 700; line-height: 14px; }

/* Ribbon */
.ribbon { display: flex; height: 92px; padding: 2px 0; background: #f5f6f7; border-bottom: 1px solid #dadbdc; }
.group { display: flex; flex-direction: column; justify-content: space-between; padding: 0 5px; border-left: 1px solid #e2e3e4; }
.tools { display: flex; }
.tool {
  display: flex;
  flex-direction: column;
  align-items: center;
  justify-content: flex-start;
  gap: 2px;
  padding: 5px 0 0;
  border: 0;
  background: none;
  line-height: 14px;
  color: #222;
  white-space: nowrap;
}
.tool:disabled { color: #888; }
.w40 { width: 40px; }
.w44 { width: 44px; }
.w48 { width: 48px; }
.w60 { width: 60px; }
.settings { background: #0078d7; color: #fff; }
.caret { display: inline-block; border: 3px solid transparent; border-top: 4px solid #222; border-bottom: 0; vertical-align: middle; }
.small-tools { display: flex; flex-direction: column; padding: 2px 4px 0 2px; }
.small-tool { display: flex; align-items: center; gap: 3px; height: 22px; padding: 0; border: 0; background: none; color: #222; white-space: nowrap; }
.group-name { text-align: center; line-height: 14px; color: #555; }

/* Address bar */
.addressbar { display: flex; align-items: stretch; gap: 12px; height: 41px; padding: 5px 12px 6px; color: #777; font-size: 13px; }
.history { display: flex; align-items: center; gap: 18px; width: 95px; margin-left: -12px; padding-right: 1px; }
.history .dim { color: #d0d0d0; }
.history .recent { margin: 0 -3px; }
.history .up { margin: 0 -6px; }
.path { flex: 1; display: flex; align-items: center; gap: 5px; padding-right: 2px; border: 1px solid #d9d9d9; color: #111; }
.path .quarter { color: #777; }
.path a { padding-right: 1px; }
.path .drop { margin-inline-start: auto; width: 22px; color: #777; }
.path .refresh { align-self: stretch; width: 29px; border-right: 1px solid #d9d9d9; color: #777; }
.search { display: flex; align-items: center; gap: 17px; width: 171px; padding-right: 14px; border: 1px solid #d9d9d9; }
.search input { flex: 1; min-width: 0; padding: 0; border: 0; background: none; outline: 0; }
.search input::placeholder { color: #6d6d6d; }

/* Workspace */
.workspace { flex: 1; display: flex; font-size: 13px; }
.tree { width: 216px; padding: 17px 0 0 2px; border-left: 1px solid #f0f0f0; }
.tree ul { list-style: none; margin: 0 0 8px; padding: 0; }
.tree a { display: flex; align-items: center; gap: 5px; height: 24px; padding: 0 24px 0 2px; white-space: nowrap; }
.tree .sub a { padding-right: 32px; }
.tree .selected { background: #d9d9d9; }
.pin { width: 12px; height: 12px; margin-inline-start: auto; }

.files { flex: 1; min-width: 0; padding: 7px 7px 0 8px; }
.files h2 { display: flex; align-items: center; gap: 3px; height: 24px; margin: 0; font-size: 16px; font-weight: 400; line-height: 24px; color: #1e3287; }
.files h2 svg { color: #666; }
.files h2::after { content: ""; flex: 1; height: 1px; margin-right: 5px; background: #e2e2e2; }
.grid { display: grid; grid-template-columns: repeat(auto-fill, 254px); grid-auto-rows: 56px; margin: 2px 11px 1px 0; }
.item { display: flex; align-items: center; gap: 5px; }
.info { display: flex; flex-direction: column; align-items: flex-start; align-self: stretch; padding: 4px 1px 0 0; white-space: nowrap; }
.info.one { padding-top: 11px; }
.bar { display: flex; width: 189px; height: 13px; margin: 1px -1px 0 0; background: #e6e6e6; border: 1px solid #bcbcbc; }
.used { background: #26a0da; }
.used.full { background: #da2626; }
.sub-text { color: #6d6d6d; }

/* Status bar */
.status { display: flex; align-items: center; justify-content: space-between; height: 24px; padding: 0 14px 2px 8px; color: #1e395b; }
.count { padding-left: 11px; border-left: 1px solid #f0f0f0; }
.views { display: flex; gap: 7px; }

/* Taskbar */
.taskbar { display: flex; height: 40px; background: #545454; color: #0c0c0c; }
.start { width: 54px; }
.white { fill: #fff; }
.dark { color: #1c1c1c; width: 30px; height: 30px; }
.tsearch { display: flex; align-items: center; width: 344px; padding-right: 12px; background: #878787; font-size: 16px; }
.tsearch input { flex: 1; min-width: 0; height: 30px; margin-right: 190px; padding: 0; border: 0; background: none; outline: 0; }
.tsearch input::placeholder { color: #404040; }
.tview { width: 51px; padding-left: 2px; }
.app { width: 61px; border: solid transparent; border-width: 0 4px; }
.app.open { box-shadow: inset 0 -2px #0078d7; }
.tray { display: flex; align-items: center; gap: 8px; margin-inline-start: auto; padding-left: 4px; }
.lang { margin: 0 3px 0 5px; }
.clock { flex-direction: column; width: 58px; font-size: 11px; line-height: 18px; }
.notif { width: 47px; height: 40px; padding-left: 11px; border-left: 1px solid #444; }
```
